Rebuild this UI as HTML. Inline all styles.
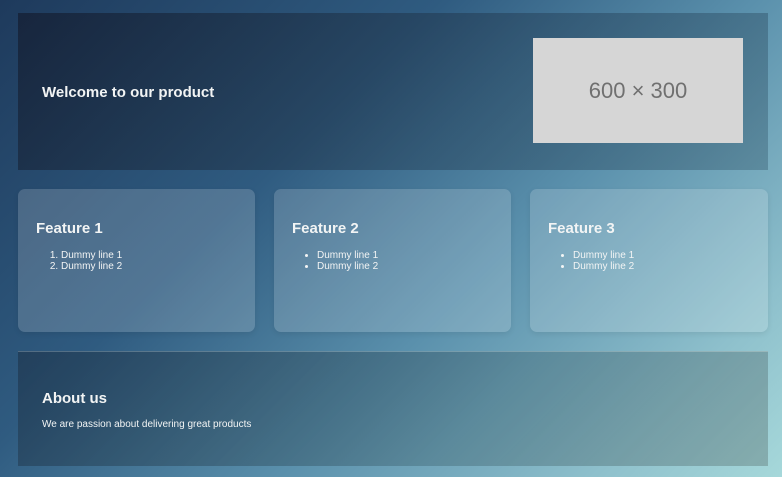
<!DOCTYPE html>
<html><head><style>
body{margin:0;width:782px;height:477px;overflow:hidden;font-family:"Liberation Sans",Arial,sans-serif;color:#f2f4f4;
background:linear-gradient(135deg,#1e3a5c 0%,#2f5b80 35%,#5a90ac 60%,#8ec0cc 85%,#a6d8da 100%);position:relative}
.hero{position:absolute;left:18px;top:13px;width:750px;height:157px;background:linear-gradient(135deg,rgba(20,30,50,.75),rgba(40,70,95,.55) 60%,rgba(60,100,120,.45))}
.hero h1{position:absolute;left:24px;top:71px;margin:0;font-size:15px;font-weight:bold}
.ph{position:absolute;left:515px;top:25px;width:210px;height:105px;background:#d6d6d6;color:#707070;font-size:22px;display:flex;align-items:center;justify-content:center;font-family:"Liberation Sans",sans-serif;font-weight:normal}
.card{position:absolute;top:189px;width:237px;height:143px;border-radius:7px;background:rgba(255,255,255,.17);box-shadow:0 2px 6px rgba(0,0,0,.08)}
.card h2{position:absolute;left:18px;top:31px;margin:0;font-size:15px;font-weight:bold}
.card ol,.card ul{position:absolute;left:18px;top:61px;margin:0;padding-left:25px;font-size:10px;line-height:11px}
.about{position:absolute;left:18px;top:351px;width:750px;height:114px;background:linear-gradient(135deg,rgba(30,55,80,.7),rgba(70,110,125,.5) 60%,rgba(110,140,140,.55));border-top:1px solid rgba(255,255,255,.2)}
.about h2{position:absolute;left:24px;top:38px;margin:0;font-size:15px}
.about p{position:absolute;left:24px;top:67px;margin:0;font-size:10px}
</style></head><body>
<div class="hero"><h1>Welcome to our product</h1><div class="ph">600 × 300</div></div>
<div class="card" style="left:18px"><h2>Feature 1</h2><ol><li>Dummy line 1</li><li>Dummy line 2</li></ol></div>
<div class="card" style="left:274px"><h2>Feature 2</h2><ul><li>Dummy line 1</li><li>Dummy line 2</li></ul></div>
<div class="card" style="left:530px;width:238px"><h2>Feature 3</h2><ul><li>Dummy line 1</li><li>Dummy line 2</li></ul></div>
<div class="about"><h2>About us</h2><p>We are passion about delivering great products</p></div>
</body></html>
